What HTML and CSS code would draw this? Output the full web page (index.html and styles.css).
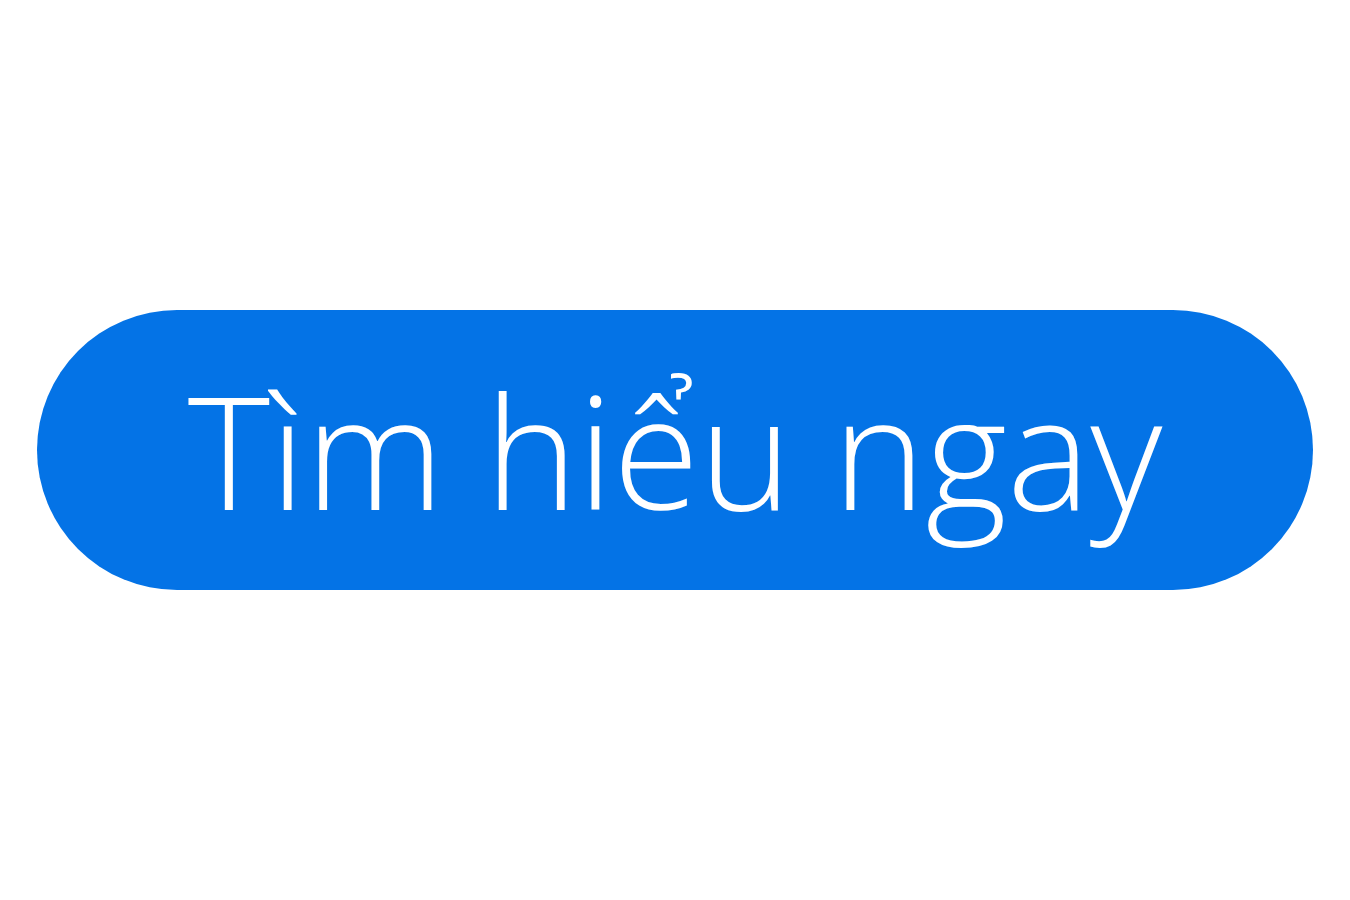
FILE: index.html
```html
<!DOCTYPE html>
<html lang="vi">
<head>
    <meta charset="UTF-8">
    <meta name="viewport" content="width=device-width, initial-scale=1.0">
    <title>Tìm hiểu ngay</title>
    <link rel="stylesheet" href="styles.css">
</head>
<body>
    <div class="page">
        <a class="cta-button" href="#">Tìm hiểu ngay</a>
    </div>
</body>
</html>
```

FILE: styles.css
```css
body {
    margin: 0;
    background-color: #ffffff;
    font-family: "Open Sans", Arial, sans-serif;
}
.page {
    display: flex;
    align-items: center;
    justify-content: center;
    height: 900px;
}
.cta-button {
    display: flex;
    align-items: center;
    justify-content: center;
    box-sizing: border-box;
    width: 1276px;
    height: 280px;
    padding-bottom: 2px;
    border-radius: 140px;
    background-color: #0473e6;
    color: #ffffff;
    font-size: 157px;
    font-weight: 300;
    line-height: 1;
    text-decoration: none;
}
```
